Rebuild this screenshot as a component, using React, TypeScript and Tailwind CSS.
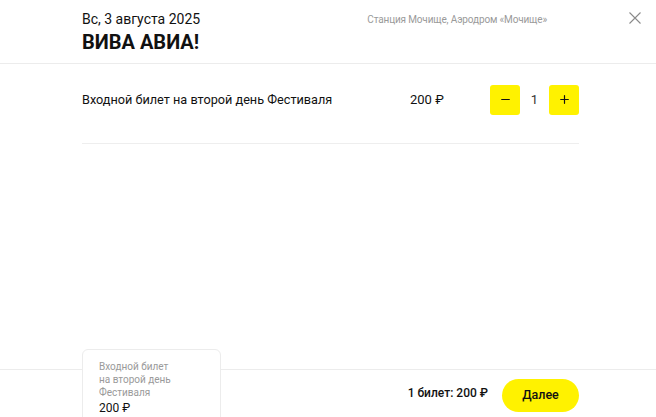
import { Minus, Plus } from 'lucide-react';

export default function App() {
  return (
    <main
      className="relative flex h-[417px] w-full flex-col overflow-hidden bg-white text-[#111]"
      style={{ fontFamily: 'Roboto, "Noto Sans", sans-serif' }}
    >
      {/* Header */}
      <header className="flex h-[64px] shrink-0 items-start justify-between border-b border-[#ececec] pl-[82px] pr-[15px] pt-[11px]">
        <div>
          <div className="text-[14px] leading-[17px] text-[#111]">Вс, 3 августа 2025</div>
          <h1 className="mt-[2px] text-[20px] font-bold leading-[24px]">ВИВА АВИА!</h1>
        </div>
        <div className="flex items-start gap-[82px]">
          <div className="pt-[2px] text-[10px] leading-[14px] tracking-[-0.15px] text-[#9a9a9a]">
            Станция Мочище, Аэродром «Мочище»
          </div>
          <button className="mt-[1px] text-[#8a8a8a]">
            <svg width="12" height="12" viewBox="0 0 12 12" fill="none" stroke="currentColor" strokeWidth="1.1">
              <path d="M0.5 0.5 11.5 11.5M11.5 0.5 0.5 11.5" />
            </svg>
          </button>
        </div>
      </header>

      {/* Ticket rows */}
      <section className="flex-1 pl-[82px] pr-[77px]">
        <div className="flex h-[80px] items-center border-b border-[#eeeeee] pb-[8px]">
          <div className="flex-1 text-[12.7px] leading-[16px]">Входной билет на второй день Фестиваля</div>
          <div className="w-[80px] text-[13px]">200 ₽</div>
          <div className="flex items-center">
            <button className="flex h-[30px] w-[30px] items-center justify-center rounded-[3px] bg-[#fff200]">
              <Minus size={13} strokeWidth={2.2} />
            </button>
            <span className="w-[29px] text-center text-[13px] text-[#333]">1</span>
            <button className="flex h-[30px] w-[30px] items-center justify-center rounded-[3px] bg-[#fff200]">
              <Plus size={13} strokeWidth={2.2} />
            </button>
          </div>
        </div>
      </section>

      {/* Footer */}
      <footer className="flex h-[48px] shrink-0 items-center justify-end gap-[14px] border-t border-[#ececec] pr-[77px]">
        <div className="pb-[2px] text-[12px] font-medium">1 билет: 200 ₽</div>
        <button className="mt-[4px] h-[33px] w-[77px] rounded-full bg-[#fff200] text-[12.5px] font-medium">Далее</button>
      </footer>

      {/* Selected ticket card */}
      <div className="absolute bottom-[-11px] left-[82px] w-[139px] rounded-[6px] border border-[#ececec] bg-white px-[16px] pb-[12px] pt-[10px]">
        <div className="text-[10px] leading-[13px] text-[#9a9a9a]">
          Входной билет
          <br />
          на второй день
          <br />
          Фестиваля
        </div>
        <div className="mt-[2px] text-[12px] leading-[14px]">200 ₽</div>
      </div>
    </main>
  );
}
